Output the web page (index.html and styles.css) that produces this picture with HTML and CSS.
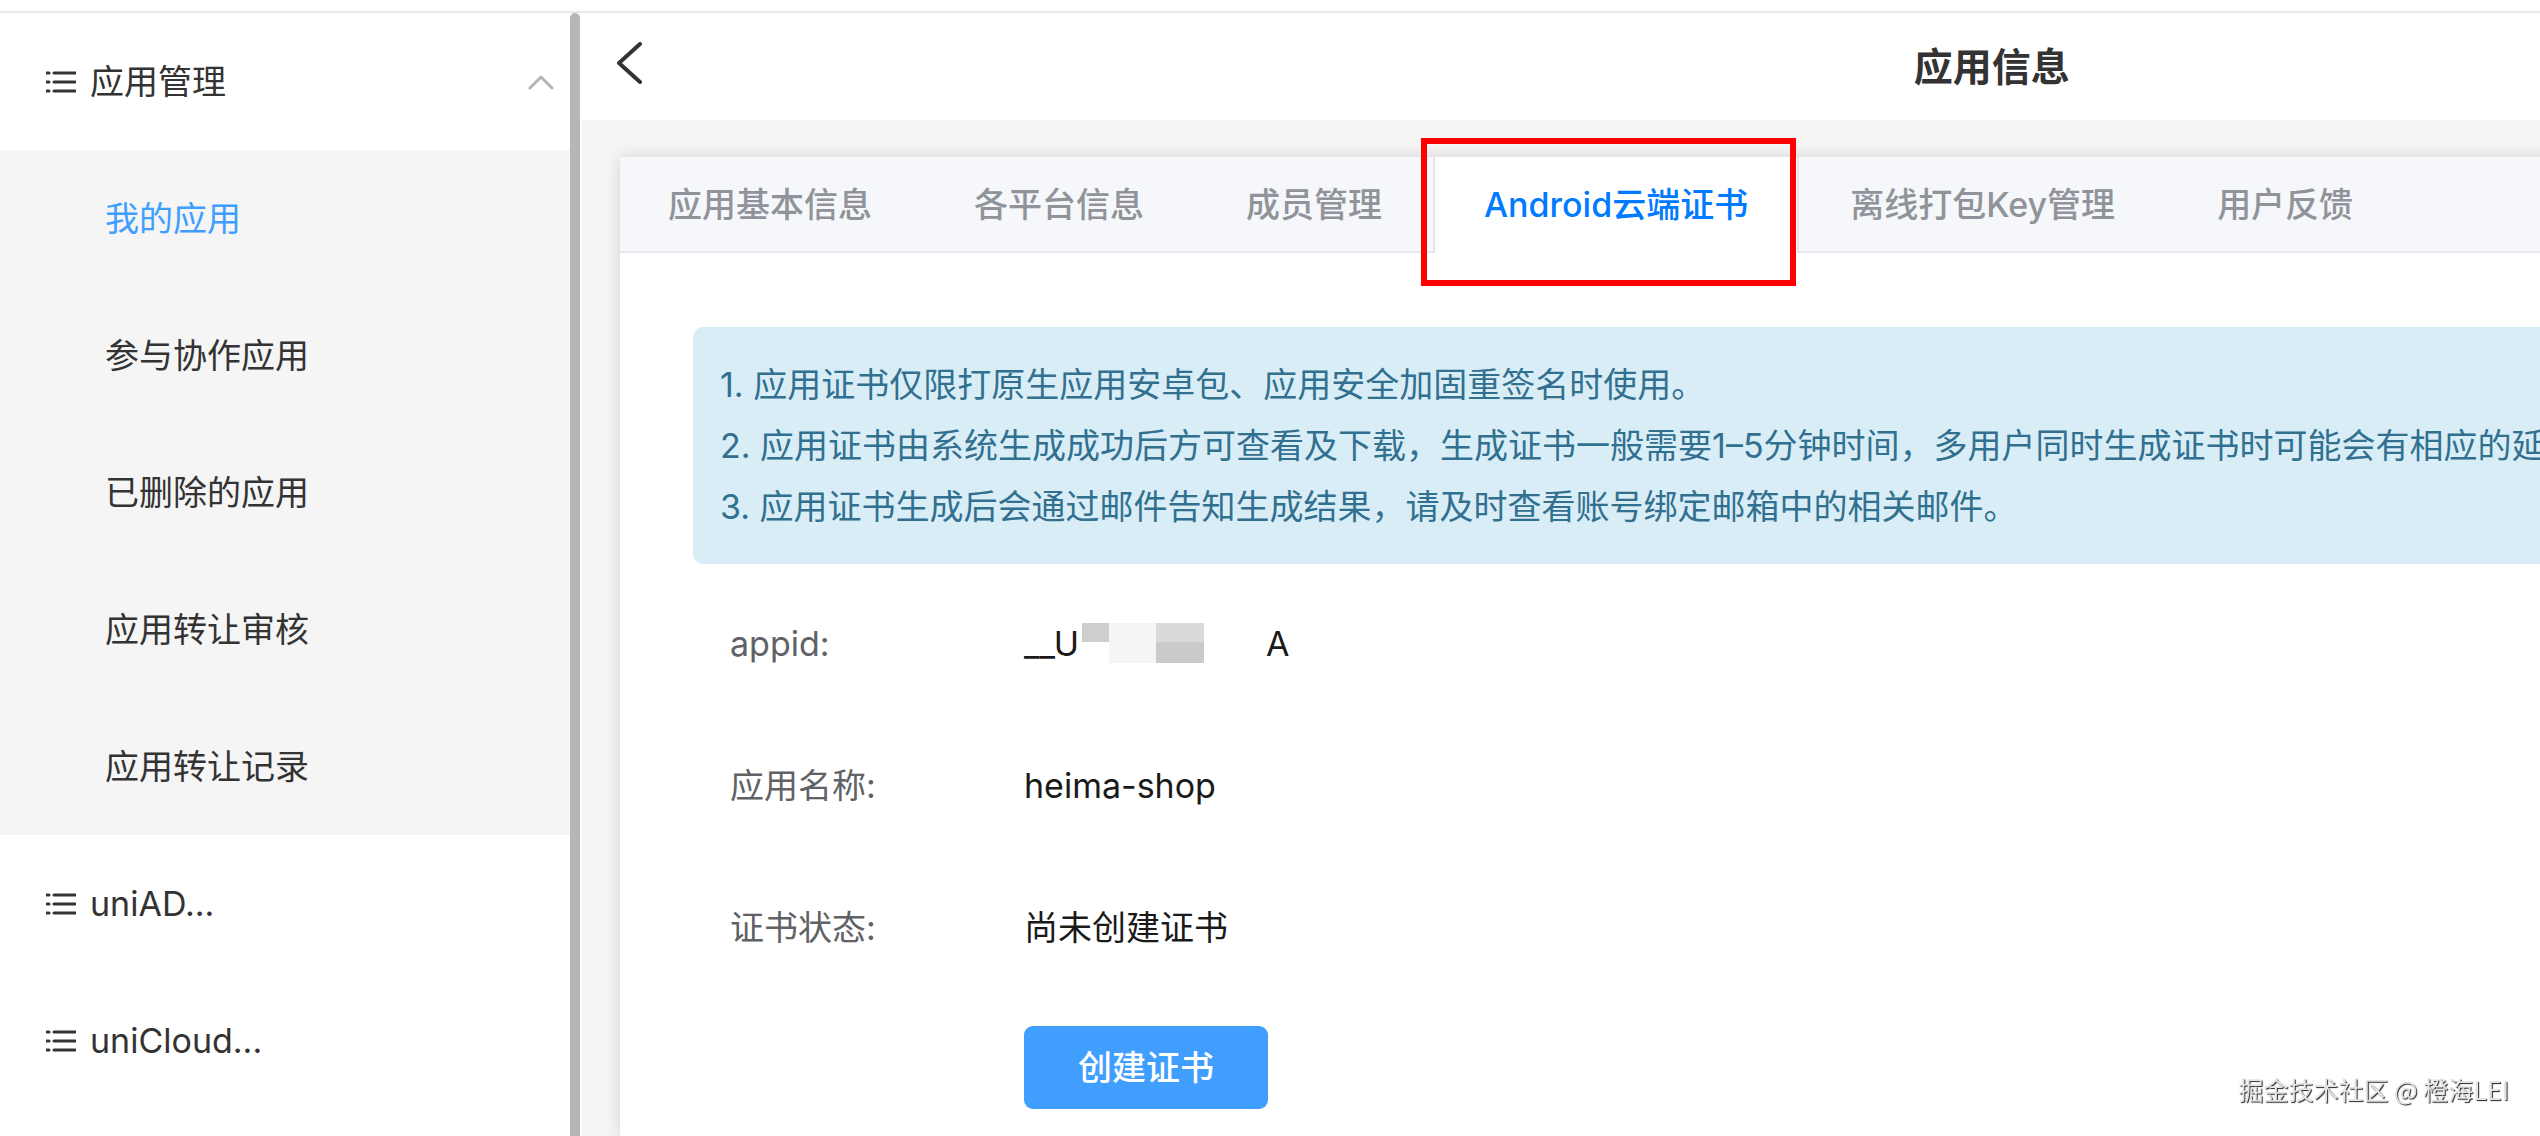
FILE: index.html
```html
<!DOCTYPE HTML>
<html lang="zh-CN">
<head>
<meta charset="utf-8">
<title>应用信息</title>
<link rel="stylesheet" href="styles.css">
</head>

<body>
<div class="topline"></div>
<div class="layout">
    <nav class="sidebar">
        <button type="button" class="menu-title" aria-expanded="true">
            <svg class="icon-list" viewBox="0 0 30 22">
                <path d="M8 2h21M8 11h21M8 20h21M1 2h2M1 11h2M1 20h2"/>
            </svg>
            <span>应用管理</span>
            <svg class="icon-arrow" viewBox="0 0 26 16">
                <path d="M2 14L13 3l11 11"/>
            </svg>
        </button>
        <ul class="submenu">
            <li><a href="#" class="active">我的应用</a></li>
            <li><a href="#">参与协作应用</a></li>
            <li><a href="#">已删除的应用</a></li>
            <li><a href="#">应用转让审核</a></li>
            <li><a href="#">应用转让记录</a></li>
        </ul>
        <button type="button" class="menu-title">
            <svg class="icon-list" viewBox="0 0 30 22">
                <path d="M8 2h21M8 11h21M8 20h21M1 2h2M1 11h2M1 20h2"/>
            </svg>
            <span>uniAD...</span>
        </button>
        <button type="button" class="menu-title">
            <svg class="icon-list" viewBox="0 0 30 22">
                <path d="M8 2h21M8 11h21M8 20h21M1 2h2M1 11h2M1 20h2"/>
            </svg>
            <span>uniCloud...</span>
        </button>
    </nav>
    <div class="scrollbar"></div>
    <main class="main">
        <div class="page">
            <header class="page-header">
                <button type="button" class="back" aria-label="返回">
                    <svg viewBox="0 0 26 42">
                        <path d="M24 2L3 21l21 19"/>
                    </svg>
                </button>
                <h1>应用信息</h1>
            </header>
            <div class="page-body">
                <section class="card">
                    <div class="tabs" role="tablist">
                        <button type="button" class="tab" role="tab">应用基本信息</button>
                        <button type="button" class="tab" role="tab">各平台信息</button>
                        <button type="button" class="tab" role="tab">成员管理</button>
                        <button type="button" class="tab current" role="tab" aria-selected="true">Android云端证书<span class="mark"></span></button>
                        <button type="button" class="tab" role="tab">离线打包Key管理</button>
                        <button type="button" class="tab" role="tab">用户反馈</button>
                    </div>
                    <div class="panel">
                        <div class="alert">
                            <p>1. 应用证书仅限打原生应用安卓包、应用安全加固重签名时使用。</p>
                            <p>2. 应用证书由系统生成成功后方可查看及下载，生成证书一般需要1–5分钟时间，多用户同时生成证书时可能会有相应的延迟。</p>
                            <p>3. 应用证书生成后会通过邮件告知生成结果，请及时查看账号绑定邮箱中的相关邮件。</p>
                        </div>
                        <dl class="info">
                            <div class="row">
                                <dt>appid:</dt>
                                <dd class="appid">
                                    <span>__U</span>
                                    <svg class="mosaic" viewBox="0 0 122 40">
                                        <rect width="27" height="19" fill="#cecece"/>
                                        <rect x="27" width="47" height="40" fill="#f5f5f5"/>
                                        <rect x="74" width="48" height="19" fill="#dadada"/>
                                        <rect x="74" y="19" width="48" height="21" fill="#cacaca"/>
                                    </svg>
                                    <span>A</span>
                                </dd>
                            </div>
                            <div class="row">
                                <dt>应用名称:</dt>
                                <dd>heima-shop</dd>
                            </div>
                            <div class="row">
                                <dt>证书状态:</dt>
                                <dd>尚未创建证书</dd>
                            </div>
                        </dl>
                        <div class="actions">
                            <button type="button" class="btn">创建证书</button>
                        </div>
                    </div>
                </section>
            </div>
        </div>
    </main>
</div>
<div class="watermark">掘金技术社区 @ 橙海LEI</div>
</body>
</html>
```

FILE: styles.css
```css
* {
    box-sizing: border-box;
}
body {
    margin: 0;
    min-height: 100vh;
    display: flex;
    flex-direction: column;
    overflow: hidden;
    background: #fff;
    color: #333;
    font-family: Inter, "Noto Sans CJK SC", sans-serif;
    font-size: 34px;
    line-height: 42px;
}
button {
    margin: 0;
    padding: 0;
    border: 0;
    background: none;
    color: inherit;
    font: inherit;
    cursor: pointer;
}
svg {
    display: block;
    flex: none;
    fill: none;
    stroke-linecap: round;
    stroke-linejoin: round;
}
.topline {
    height: 13px;
    border-bottom: 2px solid #e8e8e8;
}
.layout {
    flex: 1;
    display: flex;
}

/* Sidebar */
.sidebar {
    flex: none;
    width: 570px;
}
.menu-title {
    display: flex;
    align-items: center;
    width: 100%;
    height: 137px;
    padding: 0 16px 0 46px;
    text-align: left;
}
.icon-list {
    width: 30px;
    height: 22px;
    margin-right: 14px;
    stroke: #333;
    stroke-width: 3;
}
.icon-arrow {
    width: 26px;
    height: 16px;
    margin-left: auto;
    stroke: #b5b5b5;
    stroke-width: 3;
}
.submenu {
    margin: 0;
    padding: 0;
    list-style: none;
    background: #f5f5f5;
}
.submenu a {
    display: flex;
    align-items: center;
    height: 137px;
    padding-left: 105px;
    color: #333;
    text-decoration: none;
}
.submenu .active {
    color: #409eff;
}
.scrollbar {
    flex: none;
    width: 10px;
    margin-right: 2px;
    border-radius: 5px 5px 0 0;
    background: #b6b6b6;
}

/* Main column, the page in it is wider than the window */
.main {
    flex: 1;
    min-width: 0;
    display: flex;
    overflow: hidden;
    background: #f5f5f5;
}
.page {
    flex: none;
    width: 144%;
    display: flex;
    flex-direction: column;
}
.page-header {
    display: grid;
    grid-template-columns: 1fr auto 1fr;
    align-items: center;
    height: 107px;
    padding: 0 34px;
    background: #fff;
}
.back {
    justify-self: start;
    padding-bottom: 8px;
}
.back svg {
    width: 26px;
    height: 42px;
    stroke: #333;
    stroke-width: 4;
}
.page-header h1 {
    margin: 0;
    font-size: 39px;
    font-weight: bold;
}
.page-body {
    flex: 1;
    display: flex;
    padding: 37px 38px 0;
}
.card {
    flex: 1;
    min-width: 0;
    background: #fff;
    box-shadow: 0 0 15px rgba(0, 0, 0, .14);
}

/* Tabs */
.tabs {
    display: flex;
    height: 96px;
    border-bottom: 2px solid #e4e7ed;
    background: #f5f7fa;
}
.tab {
    position: relative;
    height: 96px;
    padding: 0 49px;
    border: solid transparent;
    border-width: 0 2px;
    color: #909399;
    font-weight: 500;
    white-space: nowrap;
}
.tab:first-child {
    padding-left: 46px;
}
.tab.current {
    border-color: #e4e7ed;
    background: #fff;
    color: #007aff;
}
.mark {
    position: absolute;
    top: -19px;
    bottom: -33px;
    left: -14px;
    right: 1px;
    border: 6px solid #f00;
}

/* Certificate panel */
.panel {
    padding: 74px 73px 26px;
}
.alert {
    padding: 27px;
    border-radius: 10px;
    background: #d9edf7;
    color: #31708f;
    line-height: 61px;
    white-space: nowrap;
}
.alert p {
    margin: 0;
}
.info {
    margin: 9px 0 0;
    padding-left: 37px;
}
.row {
    display: flex;
    padding: 50px 0;
}
.row dt {
    flex: none;
    width: 294px;
    color: #606266;
}
.row dd {
    margin: 0;
    color: #1a1a1a;
}
.appid {
    display: flex;
}
.mosaic {
    width: 122px;
    height: 40px;
    margin: 0 62px 0 3px;
}
.actions {
    padding: 27px 0 0 331px;
}
.btn {
    height: 83px;
    padding: 0 54px;
    border-radius: 9px;
    background: #409eff;
    color: #fff;
    font-weight: 500;
}

.watermark {
    position: fixed;
    right: 31px;
    bottom: 29px;
    color: #e4e4e4;
    font-family: "Noto Sans CJK SC", sans-serif;
    font-size: 25px;
    line-height: 36px;
    text-shadow: 1px 1px 1px #222;
}
```
